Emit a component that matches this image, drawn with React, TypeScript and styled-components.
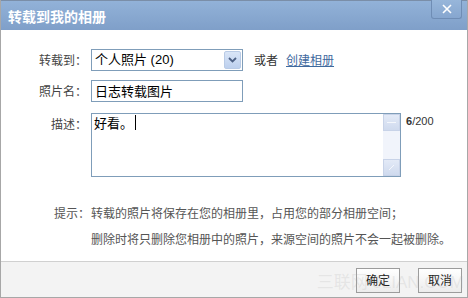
import React from "react";
import styled, { createGlobalStyle } from "styled-components";

const Global = createGlobalStyle`
  html, body { margin: 0; padding: 0; background: #fff; }
  body { font-family: "Liberation Sans", "Noto Sans CJK SC", sans-serif; }
`;

const Dialog = styled.div`
  width: 468px;
  height: 298px;
  box-sizing: border-box;
  border: 1px solid #a7a7a7;
  border-top: none;
  display: flex;
  flex-direction: column;
  position: relative;
  overflow: hidden;
  background: #fff;
`;

const TitleBar = styled.div`
  height: 30px;
  flex: none;
  background: linear-gradient(#92b2d8, #7f9fc9);
  display: flex;
  align-items: center;
  justify-content: space-between;
  padding-left: 7px;
  box-sizing: border-box;
  border-top: 1px solid #7a8ea8;
`;

const Title = styled.div`
  color: #fff;
  font-size: 14px;
  font-weight: bold;
  font-family: "Noto Sans CJK SC", sans-serif;
`;

const Close = styled.div`
  align-self: flex-start;
  width: 31px;
  height: 19px;
  margin-right: 5px;
  margin-top: -1px;
  box-sizing: border-box;
  border: 1px solid #6f8db5;
  border-top: none;
  border-radius: 0 0 3px 3px;
  background: linear-gradient(#97b6da, #86a6cf);
  display: flex;
  align-items: center;
  justify-content: center;
`;

const Body = styled.div`
  flex: 1;
  padding: 19px 0 0 0;
  display: flex;
  flex-direction: column;
`;

const Row = styled.div<{ $gap: number }>`
  display: flex;
  align-items: flex-start;
  margin-bottom: ${(p) => p.$gap}px;
`;

const Label = styled.div<{ $h: number }>`
  width: 86px;
  margin-right: 4px;
  text-align: right;
  font-size: 12px;
  color: #444;
  height: ${(p) => p.$h}px;
  line-height: ${(p) => p.$h}px;
  font-family: "Noto Sans CJK SC", sans-serif;
  flex: none;
`;

const Select = styled.div`
  width: 152px;
  height: 22px;
  box-sizing: border-box;
  border: 1px solid #7f9db9;
  display: flex;
  align-items: stretch;
  font-size: 13px;
  font-family: "Liberation Sans", "Noto Sans CJK SC", sans-serif;
  color: #000;
`;

const SelectText = styled.div`
  flex: 1;
  padding-left: 3px;
  line-height: 20px;
`;

const Arrow = styled.div`
  width: 17px;
  margin: 1px;
  box-sizing: border-box;
  border: 1px solid #b9cbe6;
  border-radius: 2px;
  background: linear-gradient(#d9e5f7, #bdd0ee);
  display: flex;
  align-items: center;
  justify-content: center;
`;

const Or = styled.span`
  margin-left: 11px;
  font-size: 12px;
  color: #333;
  line-height: 22px;
  font-family: "Noto Sans CJK SC", sans-serif;
`;

const Link = styled.a`
  margin-left: 8px;
  font-size: 12px;
  color: #3f6a9e;
  text-decoration: underline;
  line-height: 22px;
  font-family: "Noto Sans CJK SC", sans-serif;
`;

const Input = styled.div`
  width: 152px;
  height: 22px;
  box-sizing: border-box;
  border: 1px solid #7f9db9;
  padding-left: 3px;
  font-size: 13px;
  line-height: 20px;
  color: #000;
  font-family: "Noto Sans CJK SC", sans-serif;
`;

const TextArea = styled.div`
  width: 310px;
  height: 64px;
  box-sizing: border-box;
  border: 1px solid #7f9db9;
  display: flex;
`;

const TextContent = styled.div`
  flex: 1;
  padding: 0 2px;
  font-size: 13px;
  line-height: 17px;
  color: #000;
  font-family: "Noto Sans CJK SC", sans-serif;
  display: flex;
  align-items: flex-start;
`;

const Caret = styled.span`
  display: inline-block;
  width: 1px;
  height: 15px;
  background: #000;
  margin-left: 2px;
  margin-top: 1px;
`;

const ScrollBar = styled.div`
  width: 17px;
  background: #f1f4fb;
  display: flex;
  flex-direction: column;
  justify-content: space-between;
`;

const ScrollBtn = styled.div`
  height: 17px;
  box-sizing: border-box;
  border: 1px solid #c8d3e8;
  background: linear-gradient(#e3eaf7, #cfdaee);
  display: flex;
  align-items: center;
  justify-content: center;
`;

const Counter = styled.div`
  margin-left: 5px;
  margin-top: 2px;
  font-size: 11px;
  color: #333;
  font-family: "Liberation Sans", sans-serif;
  b { font-weight: bold; }
`;

const Hint = styled.div`
  margin-top: 23px;
  display: flex;
  font-size: 12px;
  color: #555;
  font-family: "Noto Sans CJK SC", sans-serif;
  line-height: 26px;
`;

const HintLabel = styled.div`
  width: 89px;
  text-align: right;
  flex: none;
`;

const HintText = styled.div`
  margin-left: 1px;
`;

const Footer = styled.div`
  height: 36px;
  flex: none;
  box-sizing: border-box;
  border-top: 1px solid #d0d0d0;
  background: #f3f3f3;
  display: flex;
  justify-content: flex-end;
  align-items: flex-start;
  padding: 6px 5px 0 0;
  gap: 18px;
`;

const Button = styled.div`
  width: 44px;
  height: 25px;
  box-sizing: border-box;
  border: 1px solid #9c9c9c;
  background: linear-gradient(#ffffff, #ececec);
  font-size: 12px;
  color: #222;
  text-align: center;
  line-height: 22px;
  font-family: "Noto Sans CJK SC", sans-serif;
`;

const Watermark = styled.div`
  position: absolute;
  right: 3px;
  bottom: 4px;
  font-size: 17px;
  color: rgba(170, 170, 170, 0.2);
  font-family: "Liberation Sans", "Noto Sans CJK SC", sans-serif;
  pointer-events: none;
`;

export default function App() {
  return (
    <>
      <Global />
      <Dialog>
        <TitleBar>
          <Title>转载到我的相册</Title>
          <Close>
            <svg width="10" height="10" viewBox="0 0 10 10">
              <path d="M1 1L9 9M9 1L1 9" stroke="#fff" strokeWidth="1.6" />
            </svg>
          </Close>
        </TitleBar>
        <Body>
          <Row $gap={9}>
            <Label $h={22}>转载到：</Label>
            <Select>
              <SelectText>个人照片 (20)</SelectText>
              <Arrow>
                <svg width="9" height="6" viewBox="0 0 9 6">
                  <path d="M1 1L4.5 4.5L8 1" stroke="#4d6185" strokeWidth="1.8" fill="none" />
                </svg>
              </Arrow>
            </Select>
            <Or>或者</Or>
            <Link>创建相册</Link>
          </Row>
          <Row $gap={11}>
            <Label $h={22}>照片名：</Label>
            <Input>日志转载图片</Input>
          </Row>
          <Row $gap={0}>
            <Label $h={22}>描述：</Label>
            <TextArea>
              <TextContent>
                好看。<Caret />
              </TextContent>
              <ScrollBar>
                <ScrollBtn>
                  <svg width="9" height="3" viewBox="0 0 9 3">
                    <path d="M0 1.5H9" stroke="#f4f7fc" strokeWidth="1" />
                  </svg>
                </ScrollBtn>
                <ScrollBtn>
                  <svg width="7" height="7" viewBox="0 0 7 7">
                    <path d="M1 6L6 1" stroke="#f4f7fc" strokeWidth="1" />
                  </svg>
                </ScrollBtn>
              </ScrollBar>
            </TextArea>
            <Counter>
              <b>6</b>/200
            </Counter>
          </Row>
          <Hint>
            <HintLabel>提示：</HintLabel>
            <HintText>
              转载的照片将保存在您的相册里，占用您的部分相册空间；
              <br />
              删除时将只删除您相册中的照片，来源空间的照片不会一起被删除。
            </HintText>
          </Hint>
        </Body>
        <Footer>
          <Button>确定</Button>
          <Button>取消</Button>
        </Footer>
        <Watermark>三联网 3LIAN.COM</Watermark>
      </Dialog>
    </>
  );
}
